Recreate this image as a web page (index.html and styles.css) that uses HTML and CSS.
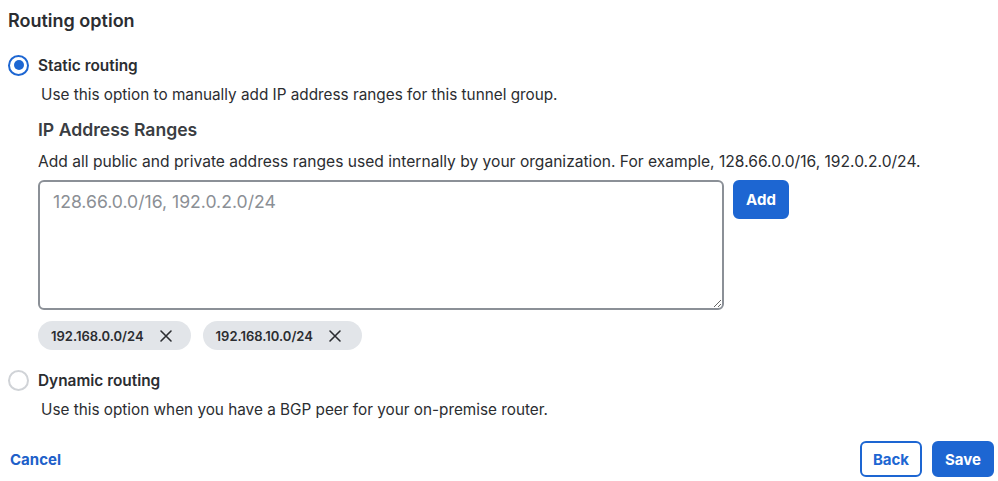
FILE: index.html
```html
<!DOCTYPE html>
<html>
<head>
<meta charset="utf-8">
<link rel="stylesheet" href="styles.css">
</head>
<body>
<div class="page">
  <h2 class="title">Routing option</h2>

  <div class="option">
    <label class="radio-row">
      <span class="radio checked"><span class="dot"></span></span>
      <span class="radio-label">Static routing</span>
    </label>
    <p class="desc">Use this option to manually add IP address ranges for this tunnel group.</p>

    <div class="ranges">
      <h3 class="sub">IP Address Ranges</h3>
      <p class="help">Add all public and private address ranges used internally by your organization. For example, 128.66.0.0/16, 192.0.2.0/24.</p>
      <div class="input-row">
        <textarea class="area" placeholder="128.66.0.0/16, 192.0.2.0/24"></textarea>
        <button class="btn primary add">Add</button>
      </div>
      <div class="chips">
        <span class="chip">192.168.0.0/24
          <svg class="x" viewBox="0 0 16 16" width="16" height="16"><path d="M3 3L13 13M13 3L3 13" stroke="#2b2d31" stroke-width="1.6" stroke-linecap="round" fill="none"/></svg>
        </span>
        <span class="chip">192.168.10.0/24
          <svg class="x" viewBox="0 0 16 16" width="16" height="16"><path d="M3 3L13 13M13 3L3 13" stroke="#2b2d31" stroke-width="1.6" stroke-linecap="round" fill="none"/></svg>
        </span>
      </div>
    </div>
  </div>

  <div class="option">
    <label class="radio-row second">
      <span class="radio"></span>
      <span class="radio-label">Dynamic routing</span>
    </label>
    <p class="desc">Use this option when you have a BGP peer for your on-premise router.</p>
  </div>

  <div class="footer">
    <a class="link">Cancel</a>
    <div class="actions">
      <button class="btn outline">Back</button>
      <button class="btn primary">Save</button>
    </div>
  </div>
</div>
</body>
</html>
```

FILE: styles.css
```css
* { box-sizing: border-box; }
html, body { margin: 0; padding: 0; background: #fff; }
body {
  font-family: Inter, "Noto Sans", "Liberation Sans", sans-serif;
  color: #2b2d31;
}
.page {
  width: 998px;
  height: 481px;
  padding: 8px 4px 0 8px;
  display: flex;
  flex-direction: column;
}
.title {
  margin: 0;
  font-size: 18px;
  font-weight: 600;
  line-height: 26px;
  color: #2b2d31;
}
.option { display: flex; flex-direction: column; }
.radio-row {
  display: flex;
  align-items: center;
  gap: 9px;
  height: 24px;
  margin-top: 19px;
}
.radio-row.second { margin-top: 18px; }
.radio {
  width: 21px;
  height: 21px;
  border-radius: 50%;
  border: 2px solid #d0d3d7;
  display: flex;
  align-items: center;
  justify-content: center;
  background: #fff;
}
.radio.checked { border: 2.5px solid #1d66d2; }
.dot { width: 10px; height: 10px; border-radius: 50%; background: #1d66d2; }
.radio-label { font-size: 15.4px; font-weight: 600; color: #2b2d31; }
.desc {
  margin: 7px 0 0 33px;
  font-size: 15.3px;
  line-height: 21px;
  color: #2b2d31;
}
.ranges { margin-left: 30px; display: flex; flex-direction: column; }
.sub {
  margin: 13px 0 0 0;
  font-size: 17.6px;
  font-weight: 600;
  line-height: 24px;
  color: #3a3d42;
}
.help {
  margin: 9px 0 0 0;
  font-size: 15.6px;
  line-height: 21px;
}
.input-row { display: flex; gap: 9px; margin-top: 8px; align-items: flex-start; }
.area {
  width: 686px;
  height: 130px;
  border: 2px solid #8b9097;
  border-radius: 6px;
  padding: 9px 13px;
  font-family: inherit;
  font-size: 17.6px;
  color: #2b2d31;
  resize: vertical;
  outline: none;
  display: block;
}
.area::placeholder { color: #8b8f95; }
.btn {
  font-family: inherit;
  font-size: 15px;
  font-weight: 700;
  border-radius: 6px;
  height: 39px;
  padding: 0 13px;
  cursor: pointer;
}
.primary { background: #1d66d2; color: #fff; border: 2px solid #1d66d2; }
.add { width: 56px; padding: 0; }
.chips { display: flex; gap: 12px; margin-top: 11px; }
.chip {
  display: inline-flex;
  align-items: center;
  gap: 14px;
  height: 29px;
  padding: 0 17px 0 13px;
  border-radius: 15px;
  background: #e2e5e9;
  font-size: 13px;
  font-weight: 600;
  color: #2b2d31;
}
.chip + .chip { padding-right: 19px; }
.x { display: block; }
.footer {
  margin-top: auto;
  margin-bottom: 4px;
  display: flex;
  justify-content: space-between;
  align-items: center;
}
.link {
  margin-left: 2px;
  font-size: 15px;
  font-weight: 700;
  color: #2060c9;
}
.actions { display: flex; gap: 10px; }
.actions .btn { width: 62px; height: 36px; padding: 0; }
.outline { background: #fff; color: #1d66d2; border: 2px solid #1d66d2; }
```
